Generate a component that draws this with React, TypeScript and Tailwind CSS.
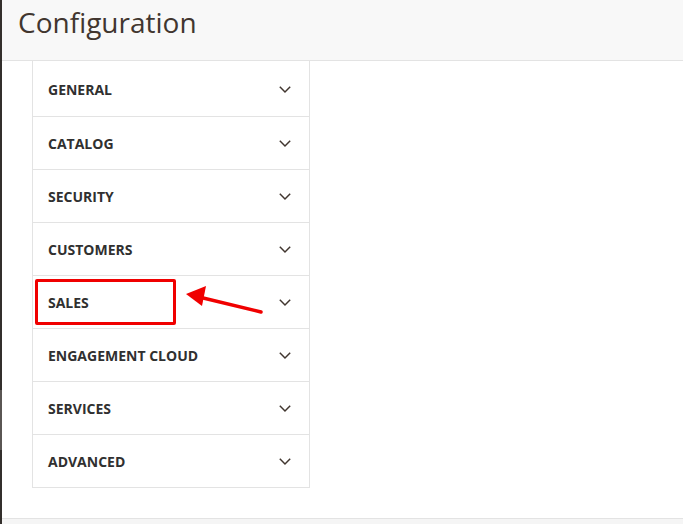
import React from "react"

const sections = [
  "General",
  "Catalog",
  "Security",
  "Customers",
  "Sales",
  "Engagement Cloud",
  "Services",
  "Advanced",
]

function Chevron() {
  return (
    <svg width="14" height="9" viewBox="0 0 14 9" fill="none" className="text-[#41362f]">
      <path d="M1.8 1.8 L7 7 L12.2 1.8" stroke="currentColor" strokeWidth="1.5" />
    </svg>
  )
}

export default function App() {
  return (
    <div className="flex h-[524px] w-[683px] overflow-hidden bg-white" style={{ fontFamily: '"Open Sans", sans-serif' }}>
      {/* left edge of the admin menu */}
      <div className="flex w-[2px] flex-col">
        <div className="h-[390px] bg-[#332f2c]" />
        <div className="h-[60px] bg-[#5a5653]" />
        <div className="flex-1 bg-[#332f2c]" />
      </div>

      <div className="flex flex-1 flex-col">
        <header className="h-[61px] shrink-0 border-b border-[#e3e3e3] bg-[#f8f8f8] pl-4 pt-[2px]">
          <h1 className="text-[28px] leading-[40px] text-[#41362f]">Configuration</h1>
        </header>

        <div className="flex-1 pl-[30px]">
          <ul className="w-[278px] border-x border-b border-[#e3e3e3] pt-[2px]">
            {sections.map((s, i) => (
              <li
                key={s}
                className={`relative flex h-[53px] items-center justify-between pl-[15px] pr-[17px] ${i > 0 ? "border-t border-[#e3e3e3]" : ""}`}
              >
                <span className="text-[14px] font-bold uppercase text-[#303030]">{s}</span>
                <Chevron />
                {s === "Sales" && (
                  <>
                    <div className="absolute left-[2px] top-[3px] h-[46px] w-[141px] rounded-[2px] border-[3px] border-[#f00000]" />
                    <svg className="absolute left-[150px] top-[10px]" width="82" height="30" viewBox="0 0 82 30">
                      <line x1="78" y1="26" x2="16" y2="11" stroke="#f00000" strokeWidth="3.5" strokeLinecap="round" />
                      <polygon points="3,8 23,0 19,20" fill="#f00000" />
                    </svg>
                  </>
                )}
              </li>
            ))}
          </ul>
        </div>

        <footer className="h-[6px] shrink-0 border-t border-[#e3e3e3] bg-[#f5f5f5]" />
      </div>
    </div>
  )
}
